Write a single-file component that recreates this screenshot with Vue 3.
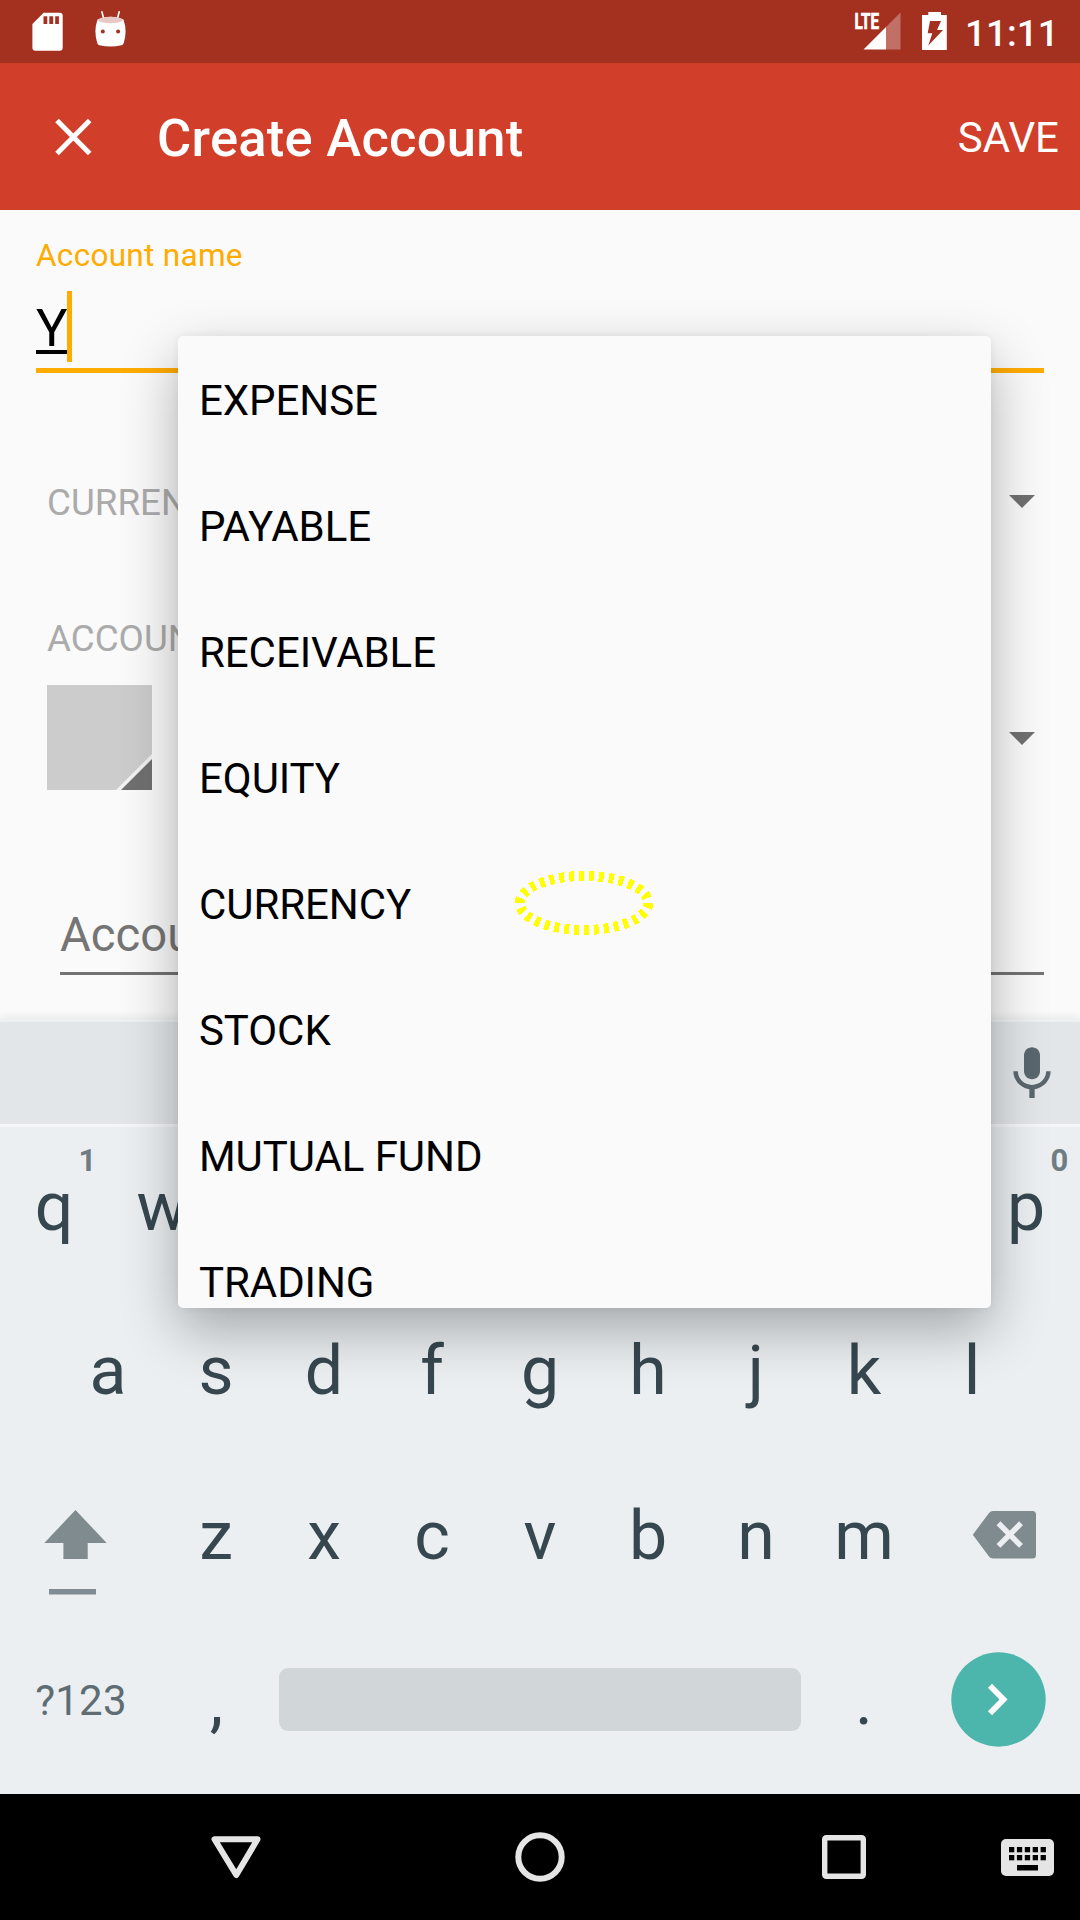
<script setup>
const accountTypes = ['EXPENSE', 'PAYABLE', 'RECEIVABLE', 'EQUITY', 'CURRENCY', 'STOCK', 'MUTUAL FUND', 'TRADING']
const topRow = 'qwertyuiop'.split('').map((letter, i) => ({ letter, hint: String((i + 1) % 10) }))
const homeRow = 'asdfghjkl'.split('')
const bottomRow = 'zxcvbnm'.split('')
const keyDots = [0, 1, 2, 3, 4]
</script>

<template>
  <div class="screen">
    <div class="status">
      <svg class="sd" width="31" height="39" viewBox="32 12 31 39">
        <path fill="#fff" fill-rule="evenodd" d="M43.6 12.7H59.7a3 3 0 0 1 3 3V47.700a3 3 0 0 1-3 3H35.400a3 3 0 0 1-3-3V24ZM43.500 16.300V24H47.300V16.300ZM49.300 16.300V24H53.200V16.300ZM55.200 16.300V24H58.900V16.300Z" />
      </svg>
      <svg class="droid" width="32" height="38" viewBox="95 10 32 38">
        <path stroke="#fff" stroke-width="1.6" stroke-linecap="round" d="M101.900 11.800 103.500 18M119.200 11.800 117.600 18" />
        <path fill="#fff" d="M97.500 19.500Q110.500 14 123.500 19.500Q127.500 31 123.800 43Q123.200 44.700 121.500 45.200Q110.500 48 99.500 45.200Q97.800 44.700 97.200 43Q93.500 31 97.500 19.500Z" />
        <ellipse cx="110.500" cy="20" rx="12.200" ry="3.200" fill="#e8c8c4" />
        <circle cx="102.800" cy="31.500" r="2" fill="#a43020" />
        <circle cx="118.100" cy="31.500" r="2" fill="#a43020" />
      </svg>
      <svg class="signal" width="48" height="39" viewBox="854 12 48 39">
        <text class="lte" x="854.5" y="29" textLength="24.500" lengthAdjust="spacingAndGlyphs">LTE</text>
        <path fill="#fff" d="M863.500 49.500 886 27V49.500Z" />
        <path fill="#c27066" d="M886 27 900.500 12.500V49.500H886Z" />
      </svg>
      <svg class="battery" width="25" height="38" viewBox="922 12 25 38">
        <path fill="#fff" fill-rule="evenodd" d="M928.300 12H941V15H946.800V50H922V15H928.300ZM930 21 927.700 33.300H932.300L928.300 45.600 943 30H937L941 21Z" />
      </svg>
      <span class="clock">11:11</span>
    </div>

    <header class="appbar">
      <svg width="40" height="40" viewBox="54.500 116.500 40 40">
        <path d="M57.500 120 90.200 153M90.200 120 57.500 153" stroke="#fff" stroke-width="5" />
      </svg>
      <h1>Create Account</h1>
      <span class="save">SAVE</span>
    </header>

    <main class="form">
      <div class="label">Account name</div>
      <div class="input"><span class="typed">Y</span><i class="cursor"></i></div>
      <div class="accent-line"></div>
      <div class="row currency">
        <span class="caption">CURRENCY</span>
        <svg class="caret" width="26" height="13" viewBox="0 0 26 13"><path d="M0 0H26L13 13Z" fill="#707070" /></svg>
      </div>
      <div class="caption color-caption">ACCOUNT COLOR &amp; TYPE</div>
      <div class="row color">
        <svg width="105" height="105" viewBox="0 0 105 105">
          <path fill="#ccc" d="M0 0H105V105H0Z" />
          <path fill="#f2f2f2" d="M105 69V105H69Z" />
          <path fill="#707070" d="M105 74V105H74Z" />
        </svg>
        <svg class="caret low" width="26" height="13" viewBox="0 0 26 13"><path d="M0 0H26L13 13Z" fill="#707070" /></svg>
      </div>
      <div class="description">Account description</div>
    </main>

    <section class="keyboard">
      <div class="suggestions">
        <svg width="64" height="64" viewBox="0 0 24 24" fill="#5a676e">
          <path d="M12 14c1.660 0 3-1.340 3-3V5c0-1.660-1.340-3-3-3S9 3.340 9 5v6c0 1.660 1.340 3 3 3z" />
          <path d="M17.300 11c0 3-2.540 5.100-5.300 5.100S6.700 14 6.700 11H5c0 3.410 2.720 6.230 6 6.720V21h2v-3.280c3.280-.480 6-3.300 6-6.720h-1.700z" />
        </svg>
      </div>
      <div class="keys first">
        <span v-for="k in topRow" :key="k.letter" class="key">{{ k.letter }}<sup>{{ k.hint }}</sup></span>
      </div>
      <div class="keys home">
        <span v-for="k in homeRow" :key="k" class="key">{{ k }}</span>
      </div>
      <div class="keys">
        <span class="wide">
          <svg width="64" height="88" viewBox="44 1509 64 88">
            <path fill="#808b8f" d="M75.500 1510 106.700 1543H87.700V1559H63.400V1543H44.300Z" />
            <path fill="#808b93" d="M49 1589H96V1594.500H49Z" />
          </svg>
        </span>
        <span v-for="k in bottomRow" :key="k" class="key">{{ k }}</span>
        <span class="wide delete">
          <svg width="64" height="48" viewBox="972 1511 64 48">
            <path fill="#808b8f" d="M993 1511H1032.500a3.500 3.500 0 0 1 3.500 3.500V1555a3.500 3.500 0 0 1-3.500 3.500H993Q990.500 1558.500 989 1556.500L972.800 1534.700 989 1513Q990.500 1511 993 1511Z" />
            <path d="M998.500 1523.300 1021 1545.900M1021 1523.300 998.500 1545.900" stroke="#ebeff2" stroke-width="5.500" />
          </svg>
        </span>
      </div>
      <div class="keys">
        <span class="wide symbols">?123</span>
        <span class="key comma">,</span>
        <span class="space"></span>
        <span class="key">.</span>
        <span class="wide">
          <svg class="enter" width="95" height="95" viewBox="0 0 95 95">
            <circle cx="47.500" cy="47.500" r="47.200" fill="#4db6ac" />
            <path d="M39 33.800 52.500 47.500 39 61.200" fill="none" stroke="#fff" stroke-width="5.800" />
          </svg>
        </span>
      </div>
    </section>

    <nav class="navbar">
      <svg width="52" height="44" viewBox="210 1835 52 44">
        <path d="M214.500 1839.300H257.500L236.300 1875Z" fill="none" stroke="#e5e5e5" stroke-width="6" stroke-linejoin="round" />
      </svg>
      <svg width="50" height="50" viewBox="0 0 50 50">
        <circle cx="25" cy="25" r="21.700" fill="none" stroke="#e5e5e5" stroke-width="6" />
      </svg>
      <svg width="44" height="44" viewBox="0 0 44 44">
        <rect x="2.700" y="2.700" width="38.600" height="38.600" rx="1.500" fill="none" stroke="#e5e5e5" stroke-width="5.400" />
      </svg>
      <svg class="ime" width="53" height="37" viewBox="0 0 53 37">
        <rect width="53" height="37" rx="5" fill="#e5e5e5" />
        <template v-for="i in keyDots" :key="i">
          <rect :x="8 + i * 7.900" y="8" width="5.300" height="5.300" />
          <rect :x="8 + i * 7.900" y="16" width="5.300" height="5.300" />
        </template>
        <rect x="16" y="26" width="21" height="5.500" />
      </svg>
    </nav>

    <div class="popup">
      <ul>
        <li v-for="t in accountTypes" :key="t">{{ t }}</li>
      </ul>
    </div>
    <svg class="marker" width="142" height="68" viewBox="0 0 142 68">
      <ellipse cx="71" cy="34" rx="64.300" ry="27" pathLength="300" fill="none" stroke="#ff0" stroke-width="10" stroke-dasharray="5 5" shape-rendering="crispEdges" />
    </svg>
  </div>
</template>

<style>
body { margin: 0; }
</style>

<style scoped>
.screen {
  position: relative;
  width: 1080px;
  height: 1920px;
  overflow: hidden;
  background: #fafafa;
  font-family: Roboto, "Noto Sans", sans-serif;
}
svg { display: block; flex: none; }
.status {
  display: flex;
  align-items: flex-start;
  box-sizing: border-box;
  height: 63px;
  padding: 12px 22px 0 32px;
  background: #a43020;
}
.droid { margin: -2px 0 0 32px; }
.signal { margin-left: auto; overflow: visible; }
.lte { font: 700 21.500px Roboto, sans-serif; fill: #fff; stroke: #fff; stroke-width: 0.7px; }
.battery { margin-left: 20px; }
.clock {
  width: 93px;
  margin: -3px 0 0 18px;
  color: #fff;
  font-size: 37px;
  font-weight: 500;
  line-height: 50px;
}
.appbar {
  display: flex;
  align-items: center;
  box-sizing: border-box;
  height: 147px;
  padding: 0 21px 0 54px;
  background: #d13e29;
  color: #fff;
}
h1 {
  flex: 1;
  margin: 3px 0 0 63px;
  font-size: 52.500px;
  font-weight: 500;
  line-height: 62px;
  letter-spacing: 0.27px;
}
.save { font-size: 42px; line-height: 50px; margin-top: 2px; }
.form {
  display: flex;
  flex-direction: column;
  box-sizing: border-box;
  height: 809px;
  padding: 26px 36px 0;
}
.label { color: #ffab00; font-size: 31.500px; line-height: 40px; letter-spacing: 0.3px; }
.input {
  display: flex;
  height: 71px;
  margin-top: 15px;
}
.typed {
  width: 31px;
  color: #000;
  font-size: 52.500px;
  line-height: 75px;
  text-decoration: underline;
  text-decoration-thickness: 3.500px;
  text-underline-offset: 4px;
}
.cursor { width: 5px; height: 71px; background: #ffab00; z-index: 1; }
.accent-line { height: 5px; margin-top: 6px; background: #ffab00; }
.row {
  display: flex;
  align-items: center;
  justify-content: space-between;
  padding: 0 9px 0 11px;
}
.currency { height: 60px; margin-top: 98px; }
.caption { color: #ababab; font-size: 36.750px; line-height: 43px; }
.currency .caption { margin-top: 2px; }
.color-caption { margin: 86px 0 0 11px; }
.color { margin-top: 25px; }
.low { margin-top: 2px; }
.description {
  margin: 115px 0 0 24px;
  padding-bottom: 7px;
  border-bottom: 3px solid #737373;
  color: #757575;
  font-size: 47.250px;
  line-height: 60px;
}
.keyboard {
  position: relative;
  height: 775px;
  background: #ebeff2;
  box-shadow: 0 -2px 8px rgba(0, 0, 0, 0.08);
}
.suggestions {
  display: flex;
  justify-content: flex-end;
  align-items: center;
  box-sizing: border-box;
  height: 108px;
  padding: 2px 16px 0 0;
  border-top: 3px solid #eef1f2;
  border-bottom: 3px solid #f4f6f7;
  background: #e2e6e9;
}
.keys { display: flex; height: 165px; color: #37474f; font-size: 68px; line-height: 167px; }
.first { height: 161px; line-height: 160px; }
.home { justify-content: center; }
.key { position: relative; width: 108px; text-align: center; }
.comma { text-indent: 1px; }
sup {
  position: absolute;
  top: 14px;
  left: 66px;
  width: 43px;
  color: #707c82;
  font-size: 31px;
  font-weight: 700;
  line-height: 40px;
}
.wide { display: flex; align-items: center; justify-content: center; width: 162px; }
.wide svg { margin: 35px 10px 0 0; }
.wide.delete svg { margin: -2px 0 0 10px; }
.wide svg.enter { margin: -2px 1px 0 0; }
.symbols { box-sizing: border-box; color: #5f6d73; font-size: 42px; letter-spacing: 0.2px; line-height: 165px; }
.space {
  width: 522px;
  height: 63px;
  margin: 50px 9px 0;
  border-radius: 9px;
  background: #d1d6d9;
}
.navbar {
  display: flex;
  align-items: center;
  position: relative;
  box-sizing: border-box;
  height: 126px;
  padding-left: 210px;
  background: #000;
}
.navbar svg + svg { margin-left: 253px; }
.navbar svg + svg + svg { margin-left: 257px; }
.navbar svg.ime { margin-left: 135px; }
.popup {
  position: absolute;
  z-index: 2;
  left: 178px;
  top: 336px;
  width: 812.500px;
  height: 972px;
  overflow: hidden;
  border-radius: 5px;
  background: #fafafa;
  box-shadow: 0 22px 56px rgba(0, 0, 0, 0.3), 0 0 8px rgba(0, 0, 0, 0.06);
}
ul { margin: 0; padding: 2px 0 0 21px; list-style: none; }
li { height: 126px; color: #000; font-size: 42px; line-height: 126px; letter-spacing: -0.07px; }
.marker { position: absolute; z-index: 3; left: 513px; top: 869px; }
</style>
